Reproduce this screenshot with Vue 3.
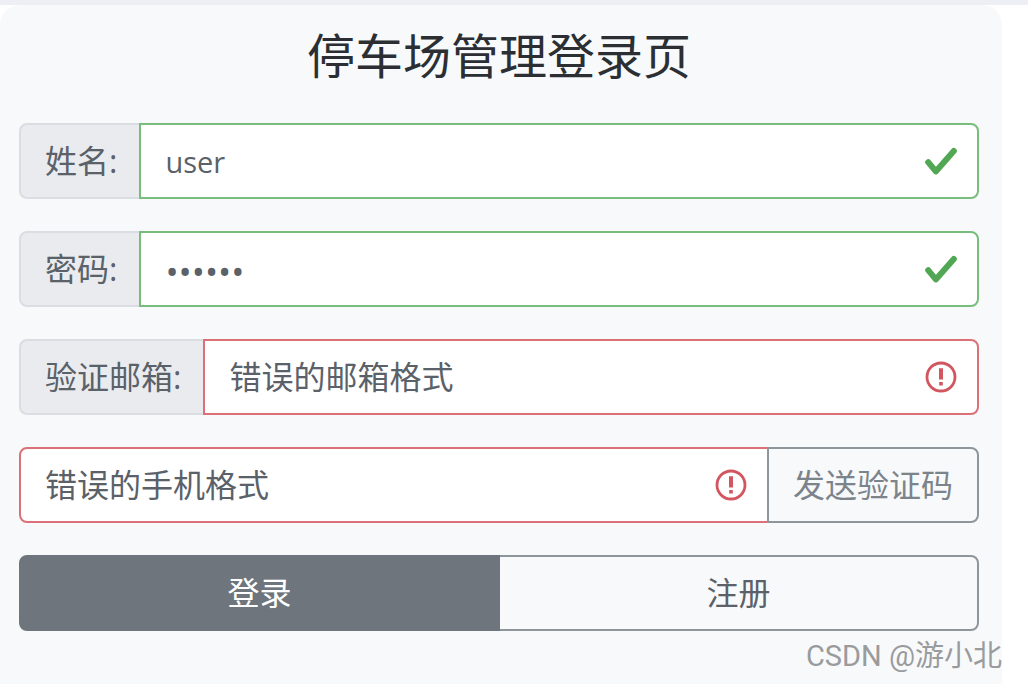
<script setup>
import { ref } from 'vue'

const name = ref('user')
const password = ref('123456')
const email = ref('错误的邮箱格式')
const phone = ref('错误的手机格式')
</script>

<template>
  <div class="page">
    <main class="card">
      <h1 class="title">停车场管理登录页</h1>
      <form class="form" @submit.prevent>
        <div class="group">
          <label class="addon" for="name">姓名:</label>
          <div class="field">
            <input id="name" v-model="name" class="control valid last latin" type="text" />
            <svg class="icon" viewBox="0 0 32 32" aria-hidden="true">
              <path d="M3.2 17.2 10.8 26.4 28.8 6" fill="none" stroke="#52a755" stroke-width="6" stroke-linecap="round" stroke-linejoin="round" />
            </svg>
          </div>
        </div>

        <div class="group">
          <label class="addon" for="password">密码:</label>
          <div class="field">
            <input id="password" v-model="password" class="control valid last secret" type="password" />
            <svg class="icon" viewBox="0 0 32 32" aria-hidden="true">
              <path d="M3.2 17.2 10.8 26.4 28.8 6" fill="none" stroke="#52a755" stroke-width="6" stroke-linecap="round" stroke-linejoin="round" />
            </svg>
          </div>
        </div>

        <div class="group">
          <label class="addon" for="email">验证邮箱:</label>
          <div class="field">
            <input id="email" v-model="email" class="control invalid last" type="text" />
            <svg class="icon" viewBox="0 0 32 32" aria-hidden="true">
              <circle cx="16" cy="16" r="14" fill="none" stroke="#d2565f" stroke-width="2.8" />
              <path d="M14 7.2h4v11.4h-4zM14.2 21h3.6v3.6h-3.6z" fill="#d2565f" />
            </svg>
          </div>
        </div>

        <div class="group">
          <div class="field">
            <input id="phone" v-model="phone" class="control invalid first" type="text" aria-label="手机" />
            <svg class="icon" viewBox="0 0 32 32" aria-hidden="true">
              <circle cx="16" cy="16" r="14" fill="none" stroke="#d2565f" stroke-width="2.8" />
              <path d="M14 7.2h4v11.4h-4zM14.2 21h3.6v3.6h-3.6z" fill="#d2565f" />
            </svg>
          </div>
          <button class="btn send" type="button">发送验证码</button>
        </div>

        <div class="group">
          <button class="btn login" type="submit">登录</button>
          <button class="btn register" type="button">注册</button>
        </div>
      </form>
      <span class="watermark">CSDN @游小北</span>
    </main>
  </div>
</template>

<style>
body {
  margin: 0;
  background: #fff;
}
</style>

<style scoped>
.page {
  box-sizing: border-box;
  min-height: 100vh;
  display: flex;
  border-top: 5px solid #eeeff4;
  padding-right: 26px;
  font-family: "Open Sans", "Noto Sans CJK SC", sans-serif;
}

.card {
  position: relative;
  flex: 1;
  min-width: 0;
  box-sizing: border-box;
  padding: 15px 23px 48px 19px;
  border-radius: 20px 20px 0 0;
  background: #f8f9fb;
}

.title {
  margin: 0 0 31px;
  font-size: 48px;
  line-height: 72px;
  font-weight: 400;
  text-align: center;
  color: #2b2f33;
}

.form {
  display: flex;
  flex-direction: column;
  gap: 32px;
}

.group {
  display: flex;
  height: 76px;
}

.addon,
.control,
.btn {
  box-sizing: border-box;
  margin: 0;
  padding: 0 24px;
  border: 2px solid #dadde2;
  font-family: inherit;
  font-size: 32px;
  line-height: 48px;
  font-weight: 400;
  color: #5a6168;
}

.addon {
  display: flex;
  align-items: center;
  padding-right: 22px;
  border-radius: 8px 0 0 8px;
  background: #e9ebef;
}

.field {
  position: relative;
  flex: 1;
  min-width: 0;
}

.addon + .field {
  margin-left: -2px;
}

.control {
  display: block;
  width: 100%;
  height: 100%;
  padding-right: 72px;
  border-radius: 0;
  background: #fff;
  outline: none;
}

.valid {
  border-color: #78bd7b;
}

.invalid {
  padding-bottom: 4px;
  border-color: #db7177;
}

.first {
  border-radius: 8px 0 0 8px;
}

.last {
  border-radius: 0 8px 8px 0;
}

.latin {
  font-size: 29px;
}

.secret {
  padding-top: 4px;
  font-size: 35px;
}

.icon {
  position: absolute;
  top: 22px;
  right: 22px;
  width: 32px;
  height: 32px;
}

.btn {
  border-color: #8e969c;
  background: transparent;
  cursor: pointer;
}

.send {
  position: relative;
  margin-left: -2px;
  border-radius: 0 8px 8px 0;
  color: #7c848b;
}

.login,
.register {
  flex: 1;
}

.login {
  position: relative;
  z-index: 1;
  border-color: #6e757c;
  border-radius: 8px 0 0 8px;
  background: #6e757c;
  color: #fff;
}

.register {
  margin-left: -2px;
  border-radius: 0 8px 8px 0;
}

.watermark {
  position: absolute;
  right: 0;
  bottom: 8px;
  font-family: Roboto, "Noto Sans CJK SC", sans-serif;
  font-size: 29px;
  line-height: 40px;
  color: #999b9d;
  white-space: nowrap;
}
</style>
